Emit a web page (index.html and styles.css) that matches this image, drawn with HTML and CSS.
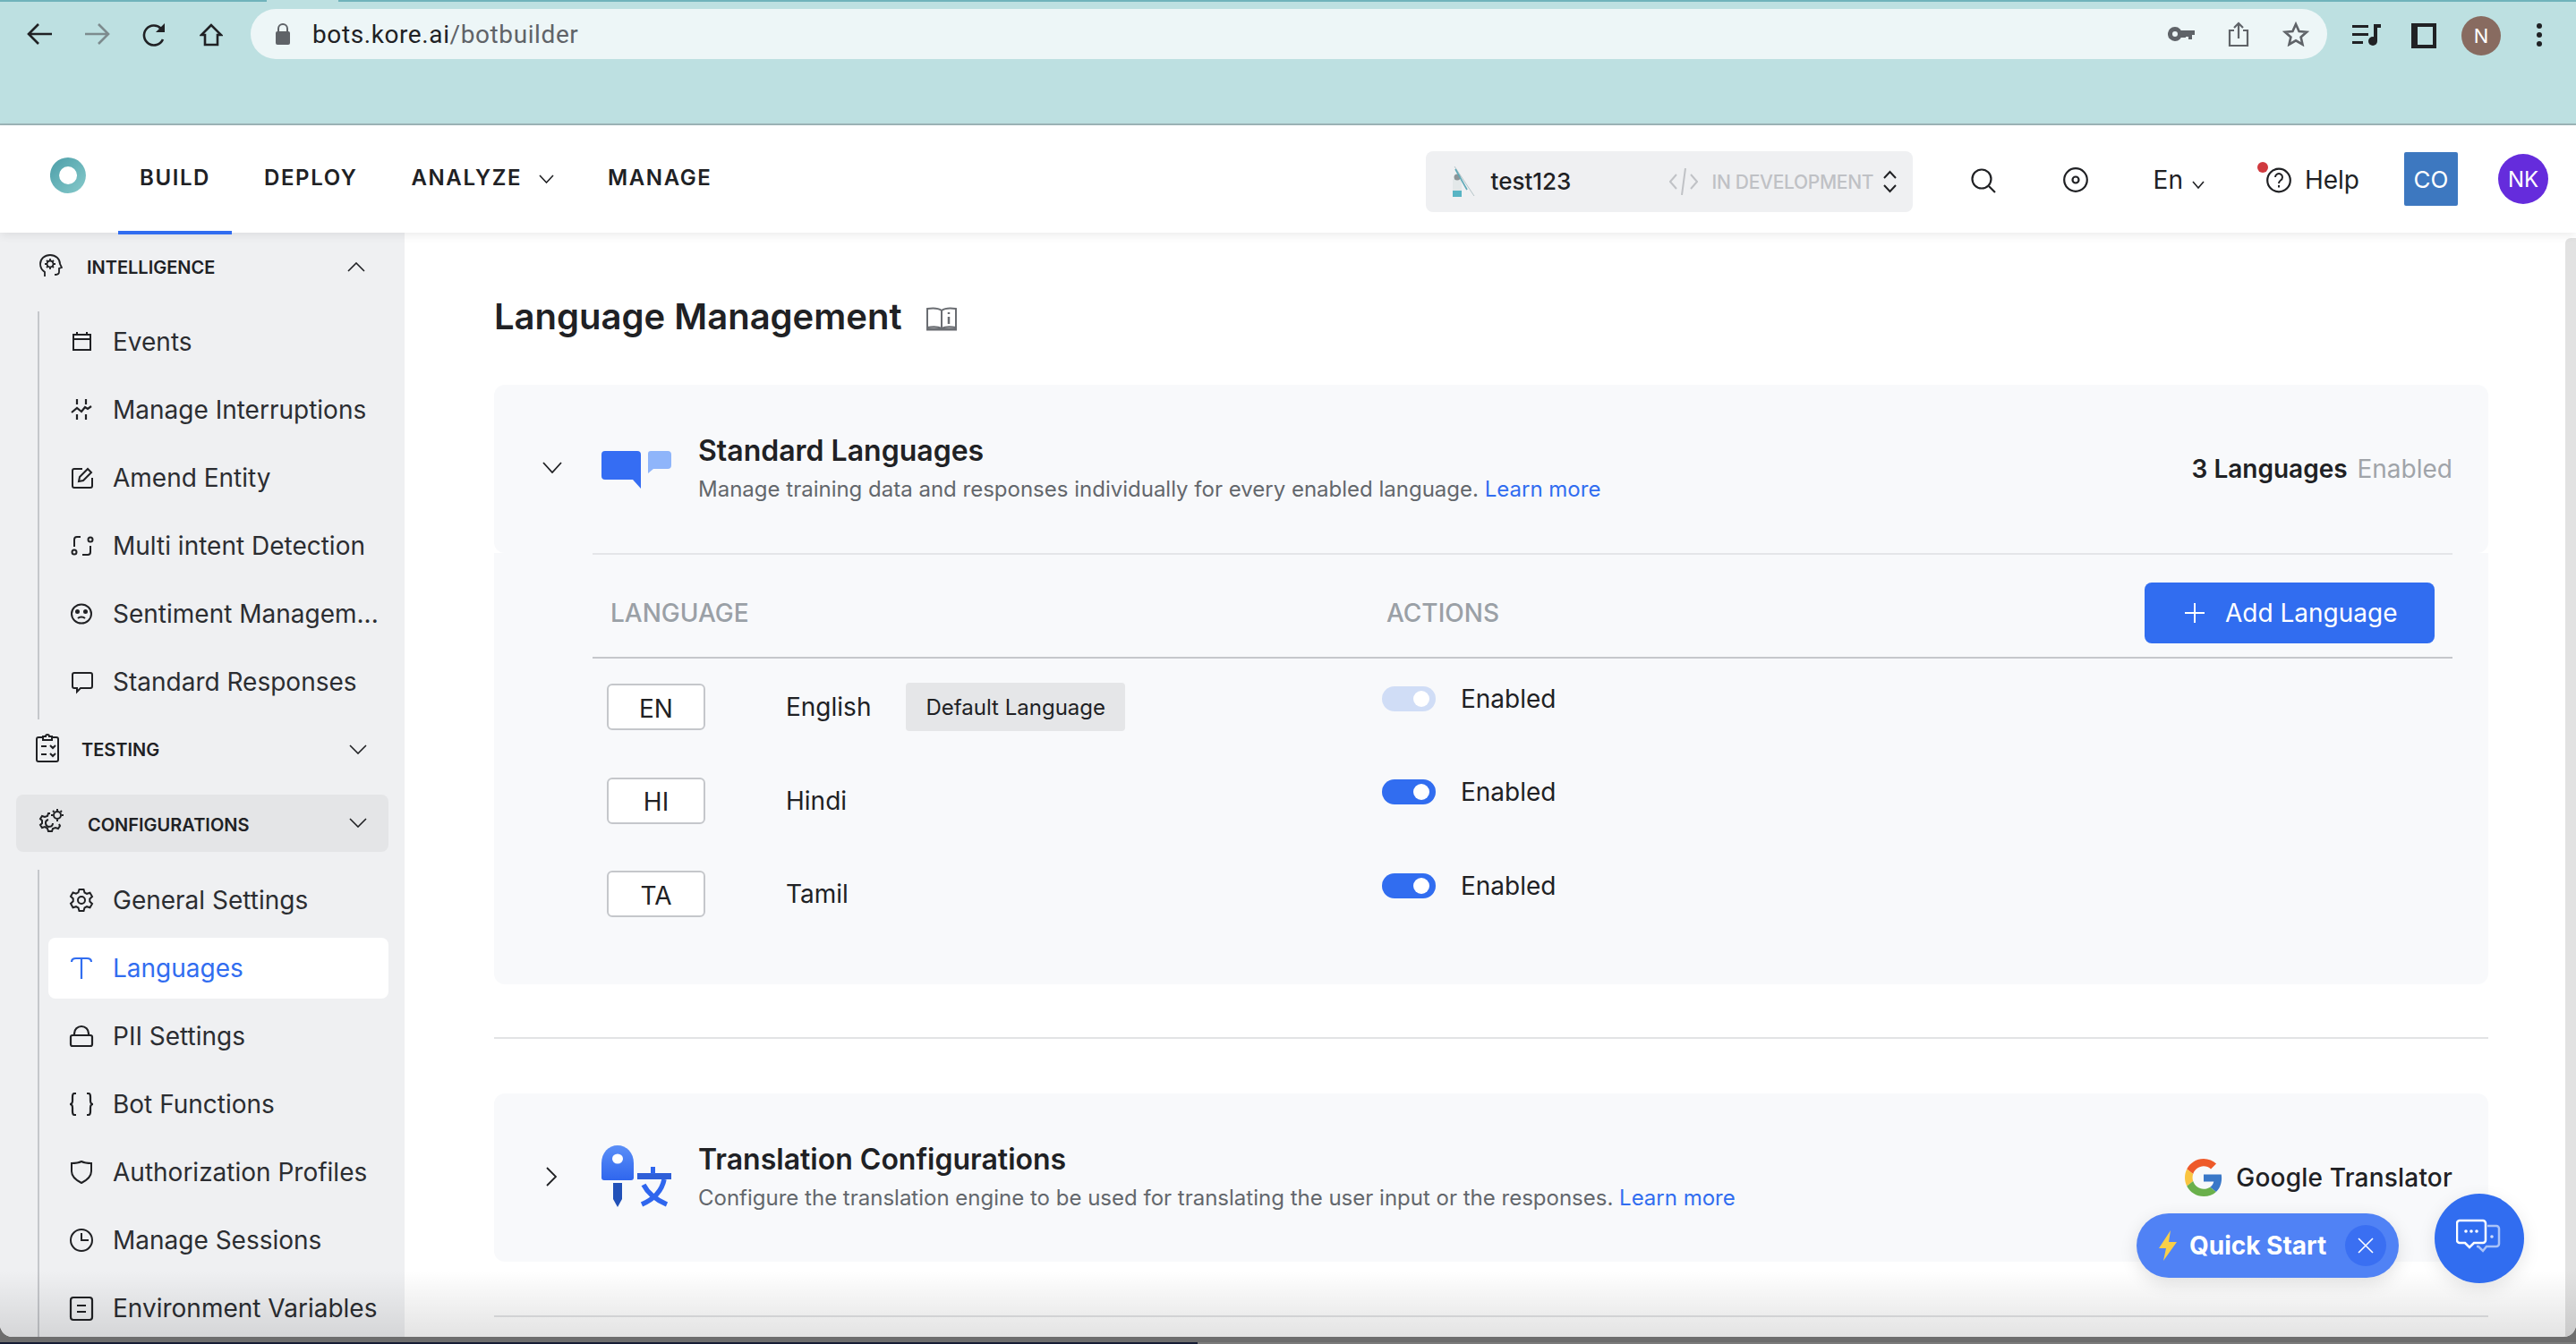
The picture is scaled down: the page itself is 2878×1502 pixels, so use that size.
FILE: index.html
```html
<!DOCTYPE html>
<html>
<head>
    <meta charset="utf-8">
    <title>Language Management</title>
    <link rel="stylesheet" href="styles.css">
</head>
<body>
<div class="window">
    <div class="chrome">
        <svg class="c-back" width="28" height="24" viewBox="0 0 28 24" fill="none" stroke="#202124" stroke-width="2.6"><path d="M28 12H3M13 1 2 12l11 11"/></svg>
        <svg class="c-fwd" width="28" height="24" viewBox="0 0 28 24" fill="none" stroke="#7d8b8e" stroke-width="2.6"><path d="M0 12h25M15 1l11 11-11 11"/></svg>
        <svg class="c-reload" width="28" height="28" viewBox="0 0 28 28" fill="none" stroke="#202124" stroke-width="2.6"><path d="M24 19a11 11 0 1 1-2-12l3 3"/><path d="M26 1v10H16z" fill="#202124" stroke="none"/></svg>
        <svg class="c-home" width="26" height="26" viewBox="0 0 26 26" fill="none" stroke="#202124" stroke-width="2.6"><path d="M13 2 2 13h4v11h14V13h4z"/></svg>
        <div class="urlbar">
            <svg class="lock" width="18" height="24" viewBox="0 0 18 24"><path d="M4 10V6a5 5 0 0 1 10 0v4" fill="none" stroke="#5f6368" stroke-width="2"/><rect x="1" y="9" width="16" height="15" rx="2" fill="#5f6368"/></svg>
            <span class="url"><b>bots.kore.ai</b>/botbuilder</span>
            <svg class="u-key" width="30" height="16" viewBox="0 0 30 16" fill="#5f6368"><path d="M8 0a8 8 0 1 1-.1 16A8 8 0 0 1 8 0zm0 5a3 3 0 1 0 0 6 3 3 0 0 0 0-6z"/><path d="M14 4h16v5h-3v5h-4v-3h-3v1h-6z"/></svg>
            <svg class="u-share" width="24" height="28" viewBox="0 0 24 28" fill="none" stroke="#5f6368" stroke-width="2.2"><path d="M7 10H2v17h20V10h-5M12 19V2M7 7l5-5 5 5"/></svg>
            <svg class="u-star" width="30" height="28" viewBox="0 0 30 28" fill="none" stroke="#5f6368" stroke-width="2.6"><path d="m15 3 3.6 8 8.4.8-6.400 5.600 1.900 8.300L15 21.300 7.500 25.700l1.900-8.300L3 11.800l8.400-.8z"/></svg>
        </div>
        <svg class="c-list" width="32" height="24" viewBox="0 0 32 24" fill="#202124"><path d="M0 1h18v3H0zM0 10h18v3H0zM0 19h12v3H0zM24 0h8v4h-4v15h-4z"/><circle cx="23" cy="19" r="5"/></svg>
        <svg class="c-panel" width="28" height="28" viewBox="0 0 28 28"><path d="M0 0h28v28H0zM7 4v20h17V4z" fill="#202124" fill-rule="evenodd"/></svg>
        <div class="c-avatar">N</div>
        <svg class="c-dots" width="6" height="26" viewBox="0 0 6 26" fill="#202124"><circle cx="3" cy="3" r="3"/><circle cx="3" cy="13" r="3"/><circle cx="3" cy="23" r="3"/></svg>
    </div>

    <div class="topbar">
        <svg class="logo" width="40" height="40" viewBox="0 0 40 40"><defs><linearGradient id="lg" x1="0" y1="0" x2="1" y2="1"><stop offset="0" stop-color="#4c9ea8"/><stop offset="1" stop-color="#86cacb"/></linearGradient></defs><path d="M20 0a20 20 0 1 1-.1 40A20 20 0 0 1 20 0zm0 10a10 10 0 1 0 .1 20 10 10 0 0 0-.1-20z" fill="url(#lg)" fill-rule="evenodd"/></svg>
        <nav class="nav">
            <a class="nav-item active">BUILD</a>
            <a class="nav-item">DEPLOY</a>
            <a class="nav-item">ANALYZE<svg class="nav-chev" width="17" height="10" viewBox="0 0 17 10" fill="none" stroke="#202124" stroke-width="1.6"><path d="m1 1 7.500 8L16 1"/></svg></a>
            <a class="nav-item">MANAGE</a>
        </nav>
        <div class="top-right">
            <div class="env">
                <svg class="syringe" width="28" height="34" viewBox="0 0 28 34" fill="none"><path d="M4 0l22 33" stroke="#b4c4c7" stroke-width="1"/><path d="M2 14h10v20H2z" fill="#e3e8e9"/><path d="M2 27h10v7H2z" fill="#58b4c4"/><circle cx="7" cy="12" r="3.500" fill="#8d9598"/><path d="M5 3l13 23" stroke="#5fa9b8" stroke-width="1.600"/></svg>
                <span class="env-name">test123</span>
                <svg class="env-code" width="32" height="30" viewBox="0 0 32 30" fill="none" stroke="#c0c2c6" stroke-width="2"><path d="M8 7 1 15l7 8M24 7l7 8-7 8M18 0l-4 30"/></svg>
                <span class="env-state">IN DEVELOPMENT</span>
                <svg class="env-updown" width="19" height="26" viewBox="0 0 19 26" fill="none" stroke="#202124" stroke-width="2"><path d="m3 9 6.500-7L16 9M3 17l6.500 7 6.500-7"/></svg>
            </div>
            <svg class="t-search" width="28" height="28" viewBox="0 0 28 28" fill="none" stroke="#202124" stroke-width="2.2"><circle cx="12" cy="12" r="10.500"/><path d="m20 20 7 7"/></svg>
            <svg class="t-target" width="28" height="28" viewBox="0 0 28 28" fill="none" stroke="#202124" stroke-width="2.2"><circle cx="14" cy="14" r="12.800"/><circle cx="14" cy="14" r="3.500"/></svg>
            <div class="t-lang">En<svg width="14" height="9" viewBox="0 0 14 9" fill="none" stroke="#202124" stroke-width="1.600"><path d="m1 1 6 7 6-7"/></svg></div>
            <div class="t-help">
                <i class="red-dot"></i>
                <svg width="28" height="29" viewBox="0 0 28 29" fill="none" stroke="#202124" stroke-width="2.200"><circle cx="14" cy="14.500" r="12.800"/><path d="M10 11a4 4 0 1 1 6 3.500c-1.500 1-2 1.800-2 3.500" stroke-width="2"/><path d="M14 20v2.500" stroke-width="2"/></svg>
                <span>Help</span>
            </div>
            <div class="t-co">CO</div>
            <div class="t-nk">NK</div>
        </div>
    </div>

    <div class="content">
        <aside class="sidebar">
            <div class="side-head">
                <svg class="sh-icon" width="26" height="26" viewBox="0 0 26 26" fill="none" stroke="#202124" stroke-width="1.800"><path d="M6 25v-5C3 18 1 15 1 11 1 5 6 1 12 1c6 0 11 4 11 10l2 4-3 1v4c0 2-2 3-5 3"/><circle cx="12" cy="11" r="3.500"/><path d="M12 5v2.500M12 14.500V17M6 11h2.500M15.500 11H18M8 7l2 2M14 13l2 2M16 7l-2 2M10 13l-2 2"/></svg>
                <span>INTELLIGENCE</span>
                <svg class="chev" width="20" height="11" viewBox="0 0 20 11" fill="none" stroke="#202124" stroke-width="1.600"><path d="m1 10 9-9 9 9"/></svg>
            </div>
            <div class="side-group">
                <a class="side-item"><svg width="32" height="32" viewBox="0 0 32 32" fill="none" stroke="#202124" stroke-width="2"><path d="M7 8h19v17H7zM7 13h19M11 5v4M22 5v4"/></svg><span>Events</span></a>
                <a class="side-item"><svg width="32" height="32" viewBox="0 0 32 32" fill="none" stroke="#202124" stroke-width="2.200"><path d="M11 4v6M21 4v6M11 21v6M21 21v6M5 19l6-5 5 4 4-5 3 2 4-3"/></svg><span>Manage Interruptions</span></a>
                <a class="side-item"><svg width="32" height="32" viewBox="0 0 32 32" fill="none" stroke="#202124" stroke-width="2"><path d="M17 6H8a2 2 0 0 0-2 2v17a2 2 0 0 0 2 2h18a2 2 0 0 0 2-2v-9"/><path d="m13 20 1-5L23 6l4 4-9 9z"/></svg><span>Amend Entity</span></a>
                <a class="side-item"><svg width="32" height="32" viewBox="0 0 32 32" fill="none" stroke="#202124" stroke-width="2"><path d="M15 6h-4a3 3 0 0 0-3 3v8M17 26h6a3 3 0 0 0 3-3v-7"/><circle cx="26" cy="9" r="2.500"/><circle cx="8" cy="23" r="2.500"/></svg><span>Multi intent Detection</span></a>
                <a class="side-item"><svg width="32" height="32" viewBox="0 0 32 32" fill="none" stroke="#202124" stroke-width="2"><ellipse cx="16" cy="16" rx="11" ry="10.500"/><circle cx="11.500" cy="13.500" r="1.500" fill="#202124"/><circle cx="20.500" cy="13.500" r="1.500" fill="#202124"/><path d="M12 21c2-2 6-2 8 0"/></svg><span>Sentiment Managem...</span></a>
                <a class="side-item"><svg width="32" height="32" viewBox="0 0 32 32" fill="none" stroke="#202124" stroke-width="2"><path d="M8 6h18a2 2 0 0 1 2 2v13a2 2 0 0 1-2 2H15l-4 4v-4H8a2 2 0 0 1-2-2V8a2 2 0 0 1 2-2z"/></svg><span>Standard Responses</span></a>
            </div>
            <div class="side-head testing">
                <svg class="sh-icon" width="26" height="32" viewBox="0 0 26 32" fill="none" stroke="#202124" stroke-width="2"><path d="M8 4H3a2 2 0 0 0-2 2v23a2 2 0 0 0 2 2h20a2 2 0 0 0 2-2V6a2 2 0 0 0-2-2h-5"/><path d="M8 7V3h3a2 2 0 0 1 4 0h3v4zM6 14h6M6 23h6M16 13l3 3 3-3M16 22l3 3 3-3"/></svg>
                <span>TESTING</span>
                <svg class="chev" width="20" height="11" viewBox="0 0 20 11" fill="none" stroke="#202124" stroke-width="1.600"><path d="m1 1 9 9 9-9"/></svg>
            </div>
            <div class="side-head open">
                <svg class="sh-icon" width="30" height="30" viewBox="0 0 30 30" fill="none" stroke="#202124" stroke-width="2"><circle cx="22" cy="8" r="4"/><path d="M22 1v2M22 13v2M15 8h2M27 8h2M17 3l1.500 1.500M27 3l-1.500 1.500"/><path d="M14 6l-2 0-1 3-3 1-3-1-2 3 2 2v3l-2 2 2 3 3-1 3 2 1 3h4l1-3 3-1 3 1 2-3-1-2"/><path d="M17 17a4 4 0 1 1-5-4"/></svg>
                <span>CONFIGURATIONS</span>
                <svg class="chev" width="20" height="11" viewBox="0 0 20 11" fill="none" stroke="#202124" stroke-width="1.600"><path d="m1 1 9 9 9-9"/></svg>
            </div>
            <div class="side-group second">
                <a class="side-item"><svg width="32" height="32" viewBox="0 0 32 32" fill="none" stroke="#202124" stroke-width="2"><circle cx="16" cy="16" r="4"/><path d="M13.500 4h5l1 3.500 2.500 1.300 3.500-1.100 2.500 4.300-2.700 2.500v3l2.700 2.500-2.500 4.300-3.500-1.100-2.500 1.300-1 3.500h-5l-1-3.500-2.500-1.300-3.500 1.100L4 19.800 6.700 17.300v-3L4 11.800l2.500-4.300L10 8.600l2.500-1.300z"/></svg><span>General Settings</span></a>
                <a class="side-item active"><svg width="32" height="32" viewBox="0 0 32 32" fill="none" stroke="#316df0" stroke-width="2.200"><path d="M5 9c0-3 2-4 5-4h12c3 0 5 1 5 4M16 5v23"/></svg><span>Languages</span></a>
                <a class="side-item"><svg width="32" height="32" viewBox="0 0 32 32" fill="none" stroke="#202124" stroke-width="2.200"><rect x="4" y="15" width="24" height="12" rx="2"/><path d="M8 15v-2a8 8 0 0 1 16 0v2"/></svg><span>PII Settings</span></a>
                <a class="side-item"><svg width="32" height="32" viewBox="0 0 32 32" fill="none" stroke="#202124" stroke-width="2.200"><path d="M10 4H8C6 4 6 6 6 8v4c0 3-1 4-3 4 2 0 3 1 3 4v4c0 2 0 4 2 4h2M22 4h2c2 0 2 2 2 4v4c0 3 1 4 3 4-2 0-3 1-3 4v4c0 2 0 4-2 4h-2"/></svg><span>Bot Functions</span></a>
                <a class="side-item"><svg width="32" height="32" viewBox="0 0 32 32" fill="none" stroke="#202124" stroke-width="2"><path d="M16 4c4 2 7 2 11 2v9c0 6-5 10-11 13C10 25 5 21 5 15V6c4 0 7 0 11-2z"/></svg><span>Authorization Profiles</span></a>
                <a class="side-item"><svg width="32" height="32" viewBox="0 0 32 32" fill="none" stroke="#202124" stroke-width="2"><circle cx="16" cy="16" r="12"/><path d="M16 8v8h8"/></svg><span>Manage Sessions</span></a>
                <a class="side-item"><svg width="32" height="32" viewBox="0 0 32 32" fill="none" stroke="#202124" stroke-width="2.200"><rect x="4" y="4" width="24" height="25" rx="3"/><path d="M11 13h10M11 20h10"/></svg><span>Environment Variables</span></a>
            </div>
        </aside>

        <main class="main">
            <div class="page-title">
                <h1>Language Management</h1>
                <svg width="36" height="28" viewBox="0 0 36 28" fill="none" stroke="#6a6d72" stroke-width="2"><path d="M18 5C14 2 8 2 2 3v21c6-1 12-1 16 1 4-2 10-2 16-1V3c-6-1-12-1-16 2zM18 5v20"/><path d="M1 26h34" stroke-width="3"/><path d="M26 12v8M26 7v2" stroke-width="2.500"/></svg>
            </div>

            <section class="card-wrap">
                <div class="card-head">
                    <svg class="card-chev" width="22" height="13" viewBox="0 0 22 13" fill="none" stroke="#202124" stroke-width="1.800"><path d="m1 1 10 11L21 1"/></svg>
                    <svg class="card-icon" width="78" height="44" viewBox="0 0 78 44"><path d="M4 2h36a4 4 0 0 1 4 4v38l-9-10H4a4 4 0 0 1-4-4V6a4 4 0 0 1 4-4z" fill="#356df3"/><path d="M55 2h19a4 4 0 0 1 4 4v12a4 4 0 0 1-4 4H58l-6 5V5a3 3 0 0 1 3-3z" fill="#8fb5fa"/></svg>
                    <div class="card-text">
                        <h2>Standard Languages</h2>
                        <p>Manage training data and responses individually for every enabled language. <a>Learn more</a></p>
                    </div>
                    <div class="card-right"><b>3 Languages</b> <span>Enabled</span></div>
                </div>
                <div class="card-body">
                    <div class="lang-head">
                        <span class="lh-lang">LANGUAGE</span>
                        <span class="lh-act">ACTIONS</span>
                        <button class="add-btn"><svg width="22" height="22" viewBox="0 0 22 22" stroke="#fff" stroke-width="2"><path d="M11 0v22M0 11h22"/></svg>Add Language</button>
                    </div>
                    <div class="lang-row">
                        <div class="lang-cell"><span class="chip">EN</span><span class="lang-name">English</span><span class="default-tag">Default Language</span></div>
                        <div class="act-cell"><i class="toggle faded"></i><span>Enabled</span></div>
                    </div>
                    <div class="lang-row">
                        <div class="lang-cell"><span class="chip">HI</span><span class="lang-name">Hindi</span></div>
                        <div class="act-cell"><i class="toggle"></i><span>Enabled</span></div>
                    </div>
                    <div class="lang-row">
                        <div class="lang-cell"><span class="chip">TA</span><span class="lang-name">Tamil</span></div>
                        <div class="act-cell"><i class="toggle"></i><span>Enabled</span></div>
                    </div>
                </div>
            </section>

            <hr class="sep first">

            <section class="card-head solo">
                <svg class="card-chev" width="22" height="22" viewBox="0 0 22 22" fill="none" stroke="#202124" stroke-width="1.800"><path d="m5 1 10 10L5 21"/></svg>
                <svg class="card-icon" width="78" height="70" viewBox="0 0 78 70"><defs><linearGradient id="kg" x1="0" y1="0" x2="0" y2="1"><stop offset="0" stop-color="#5b8ff7"/><stop offset="1" stop-color="#2f66ee"/></linearGradient></defs><path d="M18 0c10 0 18 8 18 20v16a3 3 0 0 1-3 3H3a3 3 0 0 1-3-3V20C0 8 8 0 18 0z" fill="url(#kg)"/><ellipse cx="18" cy="15" rx="6" ry="5.500" fill="#fff"/><path d="M13 42h10v18l-5 9-5-9z" fill="#2251b8"/><path d="M40 31h38v7H40z" fill="#2f5fd8"/><path d="M55 24h5v8h-5z" fill="#2f66ee"/><path d="M70 38c-2 10-9 21-25 28M47 44c4 8 12 16 26 22" stroke="#2f66ee" stroke-width="5.500" fill="none"/></svg>
                <div class="card-text">
                    <h2>Translation Configurations</h2>
                    <p>Configure the translation engine to be used for translating the user input or the responses. <a>Learn more</a></p>
                </div>
                <div class="card-right google">
                    <svg width="42" height="42" viewBox="0 0 48 48"><path fill="#ee5a2a" d="M24 9.500c3.540 0 6.710 1.220 9.210 3.600l6.850-6.850C35.900 2.380 30.470 0 24 0 14.620 0 6.510 5.380 2.560 13.220l7.980 6.190C12.430 13.720 17.740 9.500 24 9.500z"/><path fill="#3a78c8" d="M46.980 24.550c0-1.570-.15-3.090-.38-4.550H24v9.020h12.940c-.58 2.960-2.260 5.480-4.780 7.180l7.730 6c4.510-4.180 7.090-10.360 7.090-17.650z"/><path fill="#f9c440" d="M10.530 28.590c-.48-1.450-.76-2.990-.76-4.590s.27-3.140.76-4.590l-7.980-6.190C.92 16.460 0 20.120 0 24c0 3.880.92 7.540 2.560 10.780l7.970-6.190z"/><path fill="#6ab04c" d="M24 48c6.480 0 11.930-2.130 15.890-5.810l-7.730-6c-2.150 1.450-4.920 2.300-8.160 2.300-6.260 0-11.570-4.220-13.470-9.910l-7.980 6.190C6.510 42.620 14.620 48 24 48z"/></svg>
                    <b>Google Translator</b>
                </div>
            </section>

            <hr class="sep second">
        </main>
        <div class="scroll-track"></div>

        <div class="bottom-fade"></div>
        <div class="quick-start">
            <svg width="20" height="34" viewBox="0 0 20 34" fill="#f9cf48"><path d="M13 0 0 20h8L5 34l15-21h-9z"/></svg>
            <span>Quick Start</span>
            <i class="qs-close"><svg width="18" height="18" viewBox="0 0 18 18" stroke="#fff" stroke-width="1.600"><path d="m1 1 16 16M17 1 1 17"/></svg></i>
        </div>
        <div class="chat-fab">
            <svg width="52" height="42" viewBox="0 0 52 42" fill="none"><path d="M35 8h10a3 3 0 0 1 3 3v17a3 3 0 0 1-3 3H34l-4 5-5-5h-2" stroke="#a9c2f8" stroke-width="2.500"/><circle cx="40" cy="20" r="1.800" fill="#cfdcfb"/><path d="M4 2h26a3 3 0 0 1 3 3v19a3 3 0 0 1-3 3H20l-5 5-5-5H4a3 3 0 0 1-3-3V5a3 3 0 0 1 3-3z" fill="#316df0" stroke="#fff" stroke-width="2.500"/><circle cx="11" cy="14" r="1.800" fill="#fff"/><circle cx="17" cy="14" r="1.800" fill="#fff"/><circle cx="23" cy="14" r="1.800" fill="#fff"/></svg>
        </div>
    </div>
</div>
</body>
</html>
```
FILE: styles.css
```css
* { box-sizing: border-box; }
html, body { margin: 0; padding: 0; }
body {
    width: 2878px;
    height: 1502px;
    overflow: hidden;
    font-family: "Inter", "Noto Sans", sans-serif;
    color: #202124;
    background: linear-gradient(to bottom, #6d6d6d 0, #6d6d6d 1500px, transparent 1500px) no-repeat, linear-gradient(to right, #161d35 0, #161d35 1338px, #7c7c7c 1338px);
}
a { text-decoration: none; color: inherit; }
h1, h2, p { margin: 0; font-weight: inherit; }

.window {
    width: 2878px;
    height: 1494px;
    background: #fff;
    border-radius: 0 0 14px 14px;
    overflow: hidden;
    display: flex;
    flex-direction: column;
}

/* browser bar */
.chrome {
    height: 140px;
    flex: none;
    background: #bde0e1;
    border-top: 2px solid #70b3bb;
    border-bottom: 2px solid #9db5b8;
    display: flex;
    align-items: flex-start;
    padding-top: 24px;
    position: relative;
}
.chrome::before {
    content: "";
    position: absolute;
    left: 298px;
    top: -2px;
    width: 80px;
    height: 2px;
    background: #bde0e1;
}
.c-back { margin-left: 30px; }
.c-fwd { margin-left: 37px; }
.c-reload { margin-left: 35px; margin-top: -1px; }
.c-home { margin-left: 37px; }
.urlbar {
    margin-left: 31px;
    margin-top: -16px;
    width: 2320px;
    height: 56px;
    border-radius: 28px;
    background: #edf6f7;
    display: flex;
    align-items: center;
    padding-left: 27px;
}
.url { margin-left: 24px; font-family: "Roboto", sans-serif; font-size: 28px; color: #5f6368; letter-spacing: .6px; }
.url b { font-weight: 400; color: #202124; }
.u-key { margin-left: 1776px; }
.u-share { margin-left: 37px; }
.u-star { margin-left: 37px; }
.c-list { margin-left: 28px; margin-top: 1px; }
.c-panel { margin-left: 34px; }
.c-avatar {
    width: 44px;
    height: 44px;
    margin-left: 28px;
    margin-top: -8px;
    border-radius: 50%;
    background: #886b60;
    color: #fff;
    font-size: 22px;
    display: flex;
    align-items: center;
    justify-content: center;
}
.c-dots { margin-left: 40px; }

/* app top bar */
.topbar {
    height: 120px;
    flex: none;
    display: flex;
    align-items: center;
    background: #fff;
    box-shadow: 0 3px 10px rgba(0, 0, 0, .08);
    position: relative;
    z-index: 2;
}
.logo { margin-left: 56px; margin-bottom: 8px; flex: none; }
.nav { display: flex; gap: 12px; margin-left: 36px; height: 100%; }
.nav-item {
    display: flex;
    align-items: center;
    padding: 0 24px 2px;
    font-size: 24px;
    font-weight: 600;
    letter-spacing: 1.6px;
    height: 122px;
    border-bottom: 4px solid transparent;
}
.nav-item.active { border-bottom-color: #316df0; }
.nav-chev { margin-left: 19px; margin-top: 3px; }
.top-right { margin-left: auto; display: flex; align-items: center; padding-right: 31px; }
.env {
    width: 544px;
    height: 68px;
    margin-top: 6px;
    border-radius: 8px;
    background: #eff0f2;
    display: flex;
    align-items: center;
    padding-left: 28px;
}
.syringe { flex: none; }
.env-name { margin-left: 17px; font-size: 26px; font-weight: 500; width: 199px; margin-top: -2px; }
.env-code { flex: none; }
.env-state { margin-left: 16px; font-size: 21px; font-weight: 500; color: #bfc1c5; width: 189px; white-space: nowrap; letter-spacing: -.3px; }
.t-search { margin-left: 65px; margin-top: 3px; }
.t-target { margin-left: 75px; margin-top: 2px; }
.t-lang { margin-left: 73px; margin-top: 2px; font-size: 28px; display: flex; align-items: center; gap: 10px; }
.t-lang svg { margin-top: 10px; }
.t-help { margin-left: 69px; margin-top: 2px; display: flex; align-items: center; gap: 15px; font-size: 28px; position: relative; }
.red-dot { position: absolute; left: -10px; top: -3px; width: 12px; height: 12px; border-radius: 50%; background: #d0393e; }
.t-co {
    width: 60px;
    height: 60px;
    margin-left: 50px;
    border-radius: 2px;
    background: #3d78c0;
    color: #fff;
    font-size: 26px;
    display: flex;
    align-items: center;
    justify-content: center;
}
.t-nk {
    width: 56px;
    height: 56px;
    margin-left: 45px;
    border-radius: 50%;
    background: #652cdc;
    color: #fff;
    font-size: 24px;
    display: flex;
    align-items: center;
    justify-content: center;
}

/* page under the bars */
.content { flex: 1; display: flex; min-height: 0; position: relative; }

.sidebar { width: 452px; flex: none; background: #eff0f2; padding-top: 7px; overflow: hidden; }
.side-head {
    height: 64px;
    margin: 0 18px;
    width: 416px;
    border-radius: 8px;
    display: flex;
    align-items: center;
    padding-left: 26px;
    font-size: 20px;
    font-weight: 600;
}
.side-head .sh-icon { flex: none; margin-top: -4px; }
.side-head span { margin-left: 27px; }
.side-head .chev { margin-left: auto; margin-right: 26px; margin-top: -2px; }
.side-head.testing { margin-top: 2px; padding-left: 22px; }
.side-head.testing span { margin-left: 25px; }
.side-head.testing .chev, .side-head.open .chev { margin-right: 24px; }
.side-head.open { margin-top: 18px; background: #e4e5e7; padding-left: 24px; }
.side-head.open span { margin-left: 26px; margin-top: 4px; }
.side-group {
    display: flow-root;
    margin-top: 17px;
    margin-left: 42px;
    padding: 0 18px 0 10px;
    border-left: 2px solid #c5c7cb;
    width: 392px;
}
.side-group.second { margin-top: 20px; }
.side-item {
    height: 68px;
    margin-bottom: 8px;
    border-radius: 8px;
    width: 380px;
    display: flex;
    align-items: center;
    padding: 0 4px 0 21px;
    font-size: 28px;
    color: #2b2d31;
}
.side-item svg { flex: none; margin-right: 19px; }
.side-item span { white-space: nowrap; }
.side-item.active { background: #fff; color: #316df0; }

.main { flex: 1; min-width: 0; padding: 65px 86px 0 100px; overflow: hidden; }
.page-title { display: flex; align-items: center; height: 56px; margin-bottom: 49px; }
.page-title h1 { font-size: 40px; font-weight: 600; }
.page-title svg { margin-left: 26px; margin-top: 6px; }

.card-wrap { height: 670px; }
.card-head {
    height: 188px;
    display: flex;
    align-items: center;
    padding: 0 40px 0 54px;
    background: #f8f9fb;
    border-radius: 12px;
}
.card-chev { flex: none; margin-top: -3px; }
.card-icon { flex: none; margin-left: 44px; margin-right: 30px; }
.card-head.solo .card-icon { margin-top: -3px; }
.card-text h2 { font-size: 32px; font-weight: 600; line-height: 40px; }
.card-text p { margin-top: 6px; font-size: 24px; line-height: 34px; color: #63676c; white-space: nowrap; }
.card-text a { color: #316df0; }
.card-right { margin-left: auto; font-size: 28px; white-space: nowrap; }
.card-right b { font-weight: 600; }
.card-right span { color: #a0a4a9; margin-left: 3px; }
.card-right.google { display: flex; align-items: center; gap: 15px; }
.card-right.google b { font-weight: 500; letter-spacing: .2px; }

.card-body { height: 482px; padding: 0 40px 0 110px; background: #f8f9fb; border-radius: 0 0 12px 12px; }
.lang-head {
    height: 118px;
    margin-bottom: 2px;
    padding-top: 16px;
    border-top: 2px solid #e4e5e8;
    border-bottom: 2px solid #c5c7cb;
    display: flex;
    align-items: center;
    font-size: 28px;
    font-weight: 500;
    color: #9aa0a6;
}
.lh-lang { margin-left: 20px; width: 867px; }
.add-btn {
    margin-left: auto;
    margin-right: 20px;
    width: 324px;
    height: 68px;
    border: 0;
    border-radius: 8px;
    background: #316df0;
    color: #fff;
    font-family: inherit;
    font-size: 28px;
    display: flex;
    align-items: center;
    padding-left: 45px;
}
.add-btn svg { margin-right: 23px; }
.lang-row { height: 104.5px; display: flex; align-items: center; }
.lang-cell { width: 882px; flex: none; display: flex; align-items: center; padding-left: 16px; font-size: 28px; }
.chip {
    width: 110px;
    height: 52px;
    background: #fff;
    border: 2px solid #c5c7cb;
    border-radius: 6px;
    display: flex;
    align-items: center;
    justify-content: center;
    padding-top: 3px;
}
.lang-name { margin-left: 90px; }
.default-tag {
    margin-left: 39px;
    height: 54px;
    padding: 0 22px;
    border-radius: 4px;
    background: #e5e6e8;
    font-size: 24px;
    display: flex;
    align-items: center;
}
.act-cell { display: flex; align-items: center; font-size: 28px; padding-bottom: 19px; }
.toggle { width: 60px; height: 28px; border-radius: 14px; background: #316df0; position: relative; margin-right: 28px; }
.toggle::after { content: ""; position: absolute; right: 7px; top: 5px; width: 18px; height: 18px; border-radius: 50%; background: #fff; }
.toggle.faded { background: #d0ddf6; }

.sep { border: 0; height: 2px; background: #e2e3e5; margin: 0; }
.sep.first { margin-top: 59px; margin-bottom: 61px; }
.sep.second { margin-top: 60px; }

.scroll-track { width: 12px; flex: none; background: #e2e2e2; border-radius: 6px 0 0 0; margin-top: 6px; }

/* things that float over the page */
.bottom-fade {
    position: absolute;
    left: 0;
    right: 0;
    bottom: 0;
    height: 74px;
    background: linear-gradient(to bottom, rgba(0, 0, 0, 0), rgba(0, 0, 0, .11));
}
.quick-start {
    position: absolute;
    left: 2387px;
    top: 1096px;
    width: 293px;
    height: 72px;
    border-radius: 36px;
    background: #5082f5;
    color: #fff;
    box-shadow: 0 6px 20px rgba(0, 0, 0, .12);
    display: flex;
    align-items: center;
    padding-left: 25px;
    font-size: 28px;
    font-weight: 700;
}
.quick-start span { margin-left: 14px; }
.qs-close {
    position: absolute;
    right: 14px;
    top: 13px;
    width: 46px;
    height: 46px;
    border-radius: 50%;
    background: #3a6ff2;
    display: flex;
    align-items: center;
    justify-content: center;
}
.chat-fab {
    position: absolute;
    left: 2720px;
    top: 1074px;
    width: 100px;
    height: 100px;
    border-radius: 50%;
    background: #316df0;
    box-shadow: 0 6px 20px rgba(0, 0, 0, .1);
    display: flex;
    align-items: center;
    justify-content: center;
    padding-bottom: 2px;
}
```
